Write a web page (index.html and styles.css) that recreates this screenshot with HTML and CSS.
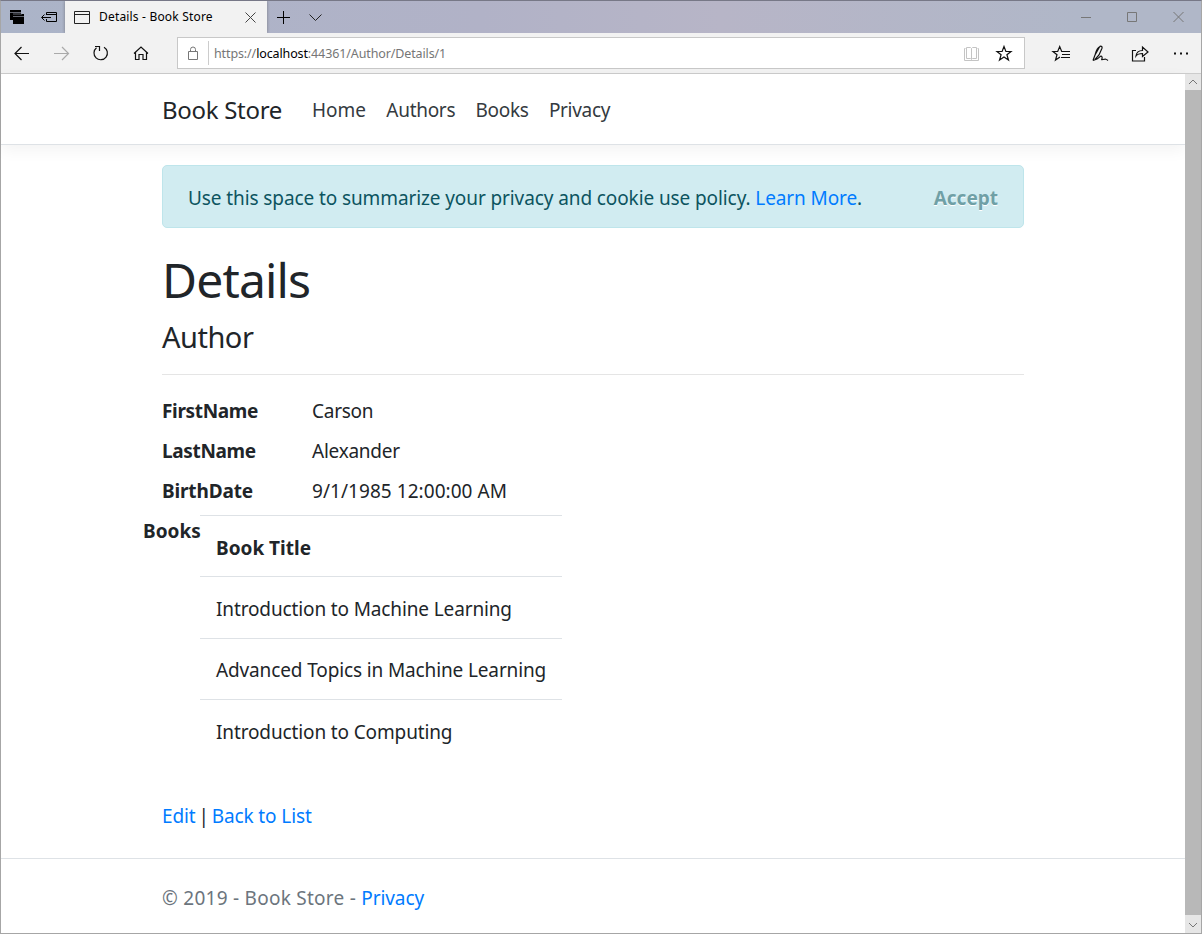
FILE: index.html
```html
<!DOCTYPE html>
<html lang="en">
<head>
<meta charset="utf-8">
<title>Details - Book Store</title>
<link rel="stylesheet" href="styles.css">
</head>
<body>
<div class="window">
  <div class="titlebar">
    <div class="tab-tools">
      <svg width="64" height="33" viewBox="0 0 64 33" fill="none" stroke="#000">
        <path d="M10 10h11v4H13v6h-3z" fill="#000" stroke="none"/>
        <path d="M13 14h11v10H13z" fill="#000" stroke="none"/>
        <path d="M10 12.500h11M13 14h9M13 16.500h11" stroke="#9095a4" stroke-width=".7"/>
        <path d="M46.500 15v-2.500h10v9h-10V19M46.500 14.500h10M42 17.500h9M44.500 14.500l-3 3 3 3"/>
      </svg>
    </div>
    <div class="tab">
      <svg class="tab-icon" width="16" height="13" viewBox="0 0 16 13" fill="none" stroke="#222"><path d="M.5.500h15v12H.5zM.5 3.500h15"/></svg>
      <span class="tab-title">Details - Book Store</span>
      <svg class="tab-close" width="11" height="11" viewBox="0 0 11 11" fill="none" stroke="#444"><path d="M.5.500l10 10M10.500.500l-10 10"/></svg>
    </div>
    <svg class="tab-actions" width="60" height="33" viewBox="0 0 60 33" fill="none" stroke="#222"><path d="M10 17.500h13M16.500 11v13" stroke="#000"/><path d="M42.500 14.500l6 6 6-6"/></svg>
    <svg class="window-controls" width="130" height="33" viewBox="0 0 130 33" fill="none" stroke="#777"><path d="M9 17.500h10M55.500 12.500h9v9h-9zM101.500 12l10 10M111.500 12l-10 10"/></svg>
  </div>
  <div class="toolbar">
    <svg class="nav-icons" width="176" height="40" viewBox="0 0 176 40" fill="none" stroke="#111" stroke-width="1.200">
      <path d="M13.500 20.500H28M20.500 14l-6.500 6.500 6.500 6.500"/>
      <path d="M53 20.500h14.500M61 14l6.500 6.500L61 27" stroke="#aaa"/>
      <path d="M95.500 14.800a6.700 6.700 0 1 0 7.500-.6M94 13.500h4.500v4.500"/>
      <path d="M133 20.500l7-6.500 7 6.500M134.500 19.500v7h3.500v-5h4v5h3.500v-7"/>
    </svg>
    <div class="address">
      <svg class="lock" width="30" height="30" viewBox="0 0 30 30" fill="none" stroke="#777"><path d="M10.500 13.500h9v8h-9zM12.500 13.500v-2a2.500 2.500 0 0 1 5 0v2"/></svg>
      <span class="url">https://<b>localhost</b>:44361/Author/Details/1</span>
      <svg class="address-actions" width="66" height="30" viewBox="0 0 66 30" fill="none">
        <path d="M7.500 10.500H6.500v12h14v-12h-1M8.500 9.500h4l1 1 1-1h4v11h-4l-1 1-1-1h-4zM13.500 10.500v10.500" stroke="#c4c4c4"/>
        <path d="M46 8.500l1.900 5h5.100l-4.100 3.200 1.600 5.300-4.500-3.100-4.500 3.100 1.600-5.300-4.100-3.200h5.100z" stroke="#111" stroke-width="1.200"/>
      </svg>
    </div>
    <svg class="browser-actions" width="160" height="40" viewBox="0 0 160 40" fill="none" stroke="#111" stroke-width="1.200">
      <path d="M25 24l-4.500 3 1.500-5.300-4-3.200h4.700l2-5 2 5h8.300M27 21.500h8M26 24.500h9"/>
      <path d="M58 27.500l2-5.500 4.500-8c1-1.500 3.200-.5 2.500 1.200L64 22l-4 4.500M60 22c1-4 3-8 5-8.500M58 27.500l4-1.500c3-2 4-4 5-2s-2 3 1 2.500 3-.5 5 1"/>
      <path d="M101 17.500h-3.500v10.500h12v-4M101 23c.5-4 3-5.500 6.500-5.500V14l5.500 5-5.500 4.500v-3c-3 0-5 .5-6.500 2.500z"/>
      <path d="M139 20.500h2M145 20.500h2M151 20.500h2" stroke-width="2"/>
    </svg>
  </div>
  <div class="viewport">
    <div class="page">
      <header class="navbar">
        <div class="container">
          <span class="brand">Book Store</span>
          <nav><a class="home">Home</a><a>Authors</a><a>Books</a><a>Privacy</a></nav>
        </div>
      </header>
      <main class="container">
        <div class="alert">
          <span class="alert-text">Use this space to summarize your privacy and cookie use policy. <a>Learn More</a>.</span>
          <button class="accept">Accept</button>
        </div>
        <h1>Details</h1>
        <h4>Author</h4>
        <hr>
        <dl>
          <dt>FirstName</dt><dd>Carson</dd>
          <dt>LastName</dt><dd>Alexander</dd>
          <dt class="birth">BirthDate</dt><dd class="date">9/1/1985 12:00:00 AM</dd>
        </dl>
        <div class="books">
          <div class="books-label">Books</div>
          <table>
            <tr><th>Book Title</th></tr>
            <tr><td>Introduction to Machine Learning</td></tr>
            <tr><td>Advanced Topics in Machine Learning</td></tr>
            <tr><td>Introduction to Computing</td></tr>
          </table>
        </div>
        <div class="links"><a>Edit</a><span class="separator">|</span><a>Back to List</a></div>
      </main>
      <footer><div class="container">© 2019 - Book Store - <a>Privacy</a></div></footer>
    </div>
    <div class="scrollbar">
      <svg width="16" height="16" viewBox="0 0 16 16" fill="none" stroke="#777"><path d="M4 10l4-4 4 4"/></svg>
      <div class="thumb"></div>
      <svg width="16" height="18" viewBox="0 0 16 18" fill="none" stroke="#777"><path d="M4 8l4 4 4-4"/></svg>
    </div>
  </div>
</div>
</body>
</html>
```
FILE: styles.css
```css
* { box-sizing: border-box; }
body {
  margin: 0;
  overflow: hidden;
  font: 19px/30px "Noto Sans", sans-serif;
  color: #212529;
}
svg { display: block; flex: none; }
.window {
  width: 1202px;
  height: 934px;
  display: flex;
  flex-direction: column;
  border: 1px solid #a6a6a6;
  border-top-color: #777887;
}
.titlebar {
  height: 32px;
  flex: none;
  display: flex;
  background: linear-gradient(90deg, #abb4c8, #b1b2c7 40%, #b7b5c7 60%, #b0b7c8 90%);
}
.titlebar > svg, .tab-tools svg { margin-top: -1px; }
.tab-tools svg { margin-left: -1px; }
.tab-tools { width: 64px; }
.tab {
  width: 202px;
  display: flex;
  align-items: center;
  background: #f2f2f2;
  box-shadow: 0 0 3px #5559;
  clip-path: inset(0 -3px 0 -3px);
}
.tab-icon { margin-left: 9px; }
.tab-title {
  width: 150px;
  margin-left: 9px;
  font-size: 12px;
  line-height: 20px;
  letter-spacing: .18px;
  color: #000;
  white-space: nowrap;
}
.tab-close { margin-left: -4px; }
.window-controls { margin-left: auto; margin-right: -1px; }
.toolbar {
  height: 41px;
  flex: none;
  display: flex;
  background: #f2f2f2;
  border-bottom: 1px solid #ccc;
}
.address {
  width: 848px;
  height: 32px;
  margin-top: 4px;
  display: flex;
  background: #fff;
  border: 1px solid #c8c8c8;
}
.url {
  margin-top: 3px;
  height: 24px;
  padding-left: 5px;
  border-left: 1px solid #ccc;
  font-size: 12.500px;
  line-height: 25px;
  letter-spacing: -.12px;
  color: #767676;
}
.url b { font-weight: 400; color: #000; }
.address-actions { margin-left: auto; }
.browser-actions { margin-left: 10px; }
.viewport { flex: 1; min-height: 0; display: flex; }
.page { width: 1184px; background: #fff; }
.container { width: 862px; margin: 0 auto; }
.navbar {
  height: 71px;
  border-bottom: 1px solid #dee2e6;
  box-shadow: 0 5px 15px rgba(0, 0, 0, .05);
}
.navbar .container { display: flex; align-items: center; height: 72px; }
.brand { width: 150px; font-size: 24px; letter-spacing: -.3px; }
.navbar nav { display: flex; gap: 20.300px; letter-spacing: -.3px; }
.navbar .home { letter-spacing: 0; }
.alert {
  height: 63px;
  margin-top: 20px;
  padding: 2px 25px 0;
  display: flex;
  align-items: center;
  justify-content: space-between;
  background: #d1ecf1;
  border: 1px solid #bee5eb;
  border-radius: 5px;
  color: #0c5460;
}
.alert-text { letter-spacing: -.1px; }
.accept {
  padding: 0;
  border: 0;
  background: none;
  font: 700 19px/30px "Noto Sans", sans-serif;
  color: #6fa0a6;
  text-shadow: 0 1px 0 #fff;
}
a { color: #007bff; }
.navbar a { color: #343a40; }
h1 { margin: 22px 0 0; font-size: 48px; line-height: 60px; font-weight: 400; letter-spacing: -.85px; }
h4 { margin: 9px 0 0; font-size: 29px; line-height: 36px; font-weight: 400; letter-spacing: -.5px; }
hr { margin: 19px 0 0; border: 0; border-top: 1px solid #e5e5e5; }
dl {
  margin: 21px 0 0;
  display: grid;
  grid-template-columns: 150px 1fr;
  row-gap: 10px;
}
dt, th { font-weight: 700; }
dt { letter-spacing: -.35px; }
.birth { letter-spacing: -.15px; }
dd { margin: 0; letter-spacing: -.25px; }
.date { letter-spacing: .05px; }
.books { display: flex; margin: 9px 0 0 -19px; }
.books-label { width: 57px; padding-top: 1px; font-weight: 700; }
table { width: 362px; border-collapse: collapse; }
th, td {
  height: 61.250px;
  padding: 3px 0 0 16px;
  border-top: 1px solid #dee2e6;
  text-align: left;
  white-space: nowrap;
}
td { letter-spacing: -.13px; }
.links { display: flex; margin-top: 40px; letter-spacing: -.1px; }
.separator { width: 16px; text-align: center; }
footer { margin-top: 27px; border-top: 1px solid #dee2e6; padding-top: 24px; color: #6c757d; letter-spacing: .26px; }
footer a { letter-spacing: -.1px; }
.scrollbar { width: 16px; display: flex; flex-direction: column; background: #e6e6e6; }
.thumb { flex: 1; background: #b8b8b8; }
```
